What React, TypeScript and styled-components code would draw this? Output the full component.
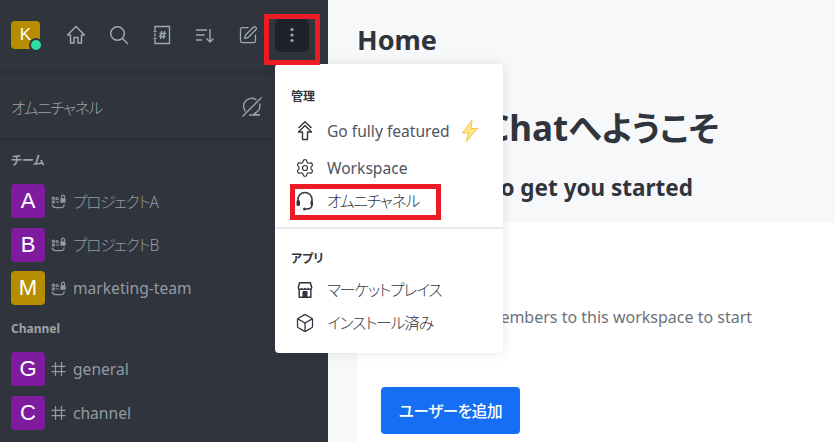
import React from "react";
import styled, { createGlobalStyle } from "styled-components";
import { Box, PenSquare, Settings } from "lucide-react";

const GlobalStyle = createGlobalStyle`
  html, body {
    margin: 0;
    height: 442px;
    overflow: hidden;
  }

  body {
    font-family: "Noto Sans", "Noto Sans CJK JP", sans-serif;
    font-feature-settings: "palt";
  }
`;

const Page = styled.div`
  position: relative;
  display: flex;
  width: 835px;
  height: 442px;
  overflow: hidden;
  background: #f7f8fa;
`;

const Sidebar = styled.aside`
  flex: 0 0 328px;
  background: #2f343d;
  color: #9ea2a8;
`;

const Toolbar = styled.div`
  display: flex;
  align-items: center;
  height: 73px;
  padding: 0 19px 2px 11px;
  box-sizing: border-box;
  border-bottom: 2px solid #2a2e36;
  color: #9ea9b5;
`;

const UserAvatar = styled.div`
  position: relative;
  display: flex;
  align-items: center;
  justify-content: center;
  width: 29px;
  height: 28px;
  margin-right: 10px;
  border-radius: 4px;
  background: #b68d00;
  color: #fff;
  font: 500 17px "Liberation Sans", sans-serif;
`;

const StatusDot = styled.span`
  position: absolute;
  right: -3px;
  bottom: -3px;
  width: 10px;
  height: 10px;
  border: 2px solid #2f343d;
  border-radius: 50%;
  background: #2de0a5;
`;

const ToolButton = styled.div<{ $active?: boolean }>`
  display: flex;
  align-items: center;
  justify-content: center;
  width: 34px;
  height: 34px;
  margin-left: ${(p) => (p.$active ? "10px" : "9px")};
  border-radius: 6px;
  background: ${(p) => (p.$active ? "#1f2329" : "transparent")};
`;

const OmniRow = styled.div`
  display: flex;
  align-items: center;
  justify-content: space-between;
  height: 67px;
  padding: 3px 65px 0 11px;
  box-sizing: border-box;
  border-bottom: 2px solid #2a2e36;
  font-size: 15.6px;
  color: #9ea2a8;
`;

const SectionLabel = styled.div<{ $top: number }>`
  margin: ${(p) => p.$top}px 0 15px 11px;
  font-size: 12px;
  font-weight: 700;
  line-height: 16px;
  color: #9ea2a8;
`;

const RoomRow = styled.div`
  display: flex;
  align-items: center;
  height: 34px;
  margin-bottom: 9.5px;
  padding-left: 11px;
  font-size: 15.6px;
  color: #959aa1;
`;

const RoomAvatar = styled.div<{ $color: string }>`
  display: flex;
  align-items: center;
  justify-content: center;
  flex: 0 0 34px;
  height: 34px;
  margin-right: 6px;
  border-radius: 4px;
  background: ${(p) => p.$color};
  color: #fff;
  font: 500 22px "Liberation Sans", sans-serif;
`;

const RoomIcon = styled.span`
  display: flex;
  width: 16px;
  margin-right: 6px;
`;

const Kana = styled.span`
  font-weight: 300;
  letter-spacing: -1.2px;
`;

const Main = styled.main`
  flex: 1;
  display: flex;
  flex-direction: column;
  min-width: 0;
`;

const PageTitle = styled.h1`
  margin: 0;
  padding: 21px 0 0 29px;
  height: 50px;
  font-size: 27px;
  font-weight: 700;
  line-height: 38px;
  color: #2f343d;
`;

const Hero = styled.section`
  height: 152px;
  color: #2f343d;
  box-sizing: border-box;
`;

const HeroTitle = styled.h2`
  margin: 0;
  padding: 32px 0 0 30px;
  font-size: 35px;
  font-weight: 700;
  line-height: 50px;
  white-space: nowrap;
`;

const HeroKana = styled.span`
  font-size: 34px;
`;

const HeroSub = styled.h3`
  margin: 0;
  padding: 20px 0 0 30px;
  font-size: 22.5px;
  font-weight: 700;
  line-height: 30px;
  white-space: nowrap;
`;

const Card = styled.section`
  flex: 1;
  margin-left: 29px;
  padding: 82px 0 0 24px;
  background: #fff;
`;

const CardText = styled.p`
  margin: 0 0 0 15px;
  width: 372px;
  font-size: 16px;
  line-height: 24px;
  color: #6c727a;
`;

const PrimaryButton = styled.button`
  display: block;
  width: 139px;
  height: 47px;
  margin-top: 34px;
  border: 0;
  border-radius: 4px;
  background: #156ff5;
  color: #fff;
  font: 500 15.6px "Noto Sans", "Noto Sans CJK JP", sans-serif;
  font-feature-settings: "palt";
  letter-spacing: -0.4px;
`;

const Menu = styled.div`
  position: absolute;
  left: 275px;
  top: 64px;
  width: 228px;
  height: 289px;
  border-radius: 4px;
  background: #fff;
  box-shadow: 0 0 12px rgba(47, 52, 61, 0.12);
  color: #2f343d;
`;

const MenuGroup = styled.div<{ $top: number }>`
  padding-top: ${(p) => p.$top}px;
`;

const MenuLabel = styled.div`
  margin-left: 16px;
  margin-bottom: 5px;
  font-size: 12px;
  font-weight: 700;
  line-height: 18px;
`;

const MenuItem = styled.div<{ $tall?: boolean }>`
  display: flex;
  align-items: center;
  height: ${(p) => (p.$tall ? "40px" : "33px")};
  padding-left: 20px;
  font-size: 15.6px;
  color: #4e5560;

  ${Kana} {
    color: #2f343d;
    letter-spacing: -1px;
  }
`;

const MenuIcon = styled.span`
  display: flex;
  justify-content: center;
  width: 20px;
  margin-right: 12px;
  color: #2f343d;
`;

const Divider = styled.div`
  height: 2px;
  margin-top: 10px;
  background: #eaeaef;
`;

const Bolt = styled.svg`
  margin-left: 11px;
`;

const Callout = styled.div<{ $x: number; $y: number; $w: number; $h: number }>`
  position: absolute;
  left: ${(p) => p.$x}px;
  top: ${(p) => p.$y}px;
  width: ${(p) => p.$w}px;
  height: ${(p) => p.$h}px;
  box-sizing: border-box;
  border: 5px solid #ed1c24;
`;

const HomeIcon = () => (
  <svg width="20" height="20" viewBox="0 0 20 20" fill="none" stroke="currentColor" strokeWidth="1.500" strokeLinejoin="round">
    <path d="M10 1.500L1.500 10h3v8h3.500v-5.500h4V18H15.500v-8h3z" />
  </svg>
);

const SearchIcon = () => (
  <svg width="20" height="20" viewBox="0 0 20 20" fill="none" stroke="currentColor" strokeWidth="1.500">
    <circle cx="8.500" cy="8.500" r="6.800" />
    <path d="M13.500 13.500L19 19" />
  </svg>
);

const DirectoryIcon = () => (
  <svg width="20" height="20" viewBox="0 0 20 20" fill="none" stroke="currentColor" strokeWidth="1.400">
    <path d="M3 5.500V1.500h14.500v17H3v-4" />
    <path d="M1.500 6.500h3M1.500 13.500h3M3 8.500v3" />
    <path d="M9.500 6l-1 8M12.500 6l-1 8M7.500 8.500h6.500M7 11.500h6.500" strokeWidth="1.300" />
  </svg>
);

const SortIcon = () => (
  <svg width="20" height="20" viewBox="0 0 20 20" fill="none" stroke="currentColor" strokeWidth="1.400">
    <path d="M1 5h11M1 10h8.500M1 15h6" />
    <path d="M15 4v13M11.500 13.500L15 17l3.500-3.500" />
  </svg>
);

const KebabIcon = () => (
  <svg width="20" height="20" viewBox="0 0 20 20" fill="#9ea9b5">
    <circle cx="10" cy="4.500" r="1.600" />
    <circle cx="10" cy="10" r="1.600" />
    <circle cx="10" cy="15.500" r="1.600" />
  </svg>
);

const MutedChatIcon = () => (
  <svg width="22" height="22" viewBox="0 0 22 22" fill="none" stroke="currentColor" strokeWidth="1.400">
    <path d="M4.500 15.500A8 8 0 0 1 15.500 4M18.500 7.500a8 8 0 0 1-5 10c1 1 3 1.500 5.500 1.500H8" />
    <path d="M1.500 20.500L20.500 1.500" />
  </svg>
);

const TeamIcon = () => (
  <svg width="17" height="17" viewBox="0 0 17 17" fill="none" stroke="currentColor" strokeWidth="1.200">
    <circle cx="2.500" cy="5" r="1.200" />
    <circle cx="2.500" cy="9" r="1.200" />
    <circle cx="6.500" cy="5.500" r="1.200" />
    <path d="M1 12c.5 1.500 2 3 4 3h6c1.500 0 3-1.200 3-3.500M5 9h3.500" />
    <rect x="10" y="5" width="5.500" height="4.800" rx="0.600" fill="currentColor" stroke="none" />
    <path d="M11.200 5V3.300a1.600 1.600 0 0 1 3.200 0V5" />
  </svg>
);

const HashIcon = () => (
  <svg width="16" height="16" viewBox="0 0 16 16" fill="none" stroke="currentColor" strokeWidth="1.200">
    <path d="M4.500 1v14M10.500 1v14M.5 5.300h14M.5 10.700h14" />
  </svg>
);

const UpgradeIcon = () => (
  <svg width="18" height="20" viewBox="0 0 18 20" fill="none" stroke="currentColor" strokeWidth="1.400" strokeLinejoin="round">
    <path d="M2.500 7L9 .8 15.500 7" />
    <path d="M9 4.500L2.500 11h4v7.500h5V11h4z" />
  </svg>
);

const HeadsetIcon = () => (
  <svg width="20" height="20" viewBox="0 0 20 20" fill="none" stroke="currentColor" strokeWidth="1.500">
    <path d="M3 10.500V8.500a7 7 0 0 1 14 0v2" />
    <rect x="1.500" y="9" width="3.500" height="6" rx="1.500" fill="currentColor" stroke="none" />
    <rect x="15.500" y="9.500" width="2.500" height="5" rx="1.200" fill="currentColor" stroke="none" />
    <path d="M17 14c0 3-2.500 4-6 4" />
    <circle cx="9.500" cy="18" r="1.500" fill="currentColor" stroke="none" />
  </svg>
);

const StoreIcon = () => (
  <svg width="18" height="18" viewBox="0 0 20 20" fill="none" stroke="currentColor" strokeWidth="1.600" strokeLinejoin="round">
    <path d="M4 2h12l1.500 5.500a2 2 0 0 1-3.700.8 2.300 2.300 0 0 1-3.800 0 2.300 2.300 0 0 1-3.800 0 2 2 0 0 1-3.700-.8z" />
    <path d="M3.500 9v9h13V9" />
    <path d="M8 18v-6h4v6" fill="currentColor" />
  </svg>
);

const rooms = [
  { letter: "A", color: "#7f1b9f", team: true, name: "プロジェクトA" },
  { letter: "B", color: "#7f1b9f", team: true, name: "プロジェクトB" },
  { letter: "M", color: "#b68d00", team: true, name: "marketing-team" },
];

const channels = [
  { letter: "G", color: "#7f1b9f", team: false, name: "general" },
  { letter: "C", color: "#7f1b9f", team: false, name: "channel" },
];

type Room = (typeof rooms)[number];

const RoomItem = ({ room }: { room: Room }) => (
  <RoomRow>
    <RoomAvatar $color={room.color}>{room.letter}</RoomAvatar>
    <RoomIcon>{room.team ? <TeamIcon /> : <HashIcon />}</RoomIcon>
    {room.name.startsWith("プ") ? <Kana>{room.name}</Kana> : room.name}
  </RoomRow>
);

export default function App() {
  return (
    <Page>
      <GlobalStyle />
      <Sidebar>
        <Toolbar>
          <UserAvatar>
            K
            <StatusDot />
          </UserAvatar>
          <ToolButton><HomeIcon /></ToolButton>
          <ToolButton><SearchIcon /></ToolButton>
          <ToolButton><DirectoryIcon /></ToolButton>
          <ToolButton><SortIcon /></ToolButton>
          <ToolButton><PenSquare size={20} strokeWidth={1.5} /></ToolButton>
          <ToolButton $active><KebabIcon /></ToolButton>
        </Toolbar>
        <OmniRow>
          <Kana>オムニチャネル</Kana>
          <MutedChatIcon />
        </OmniRow>
        <SectionLabel $top={13}>チーム</SectionLabel>
        {rooms.map((room) => (
          <RoomItem key={room.letter} room={room} />
        ))}
        <SectionLabel $top={16}>Channel</SectionLabel>
        {channels.map((room) => (
          <RoomItem key={room.letter} room={room} />
        ))}
      </Sidebar>

      <Main>
        <PageTitle>Home</PageTitle>
        <Hero>
          <HeroTitle>Rocket.Chat<HeroKana>へようこそ</HeroKana></HeroTitle>
          <HeroSub>Some ideas to get you started</HeroSub>
        </Hero>
        <Card>
          <CardText>Invite team members to this workspace to start chatting</CardText>
          <PrimaryButton>ユーザーを追加</PrimaryButton>
        </Card>
      </Main>

      <Menu>
        <MenuGroup $top={24}>
          <MenuLabel>管理</MenuLabel>
          <MenuItem $tall>
            <MenuIcon><UpgradeIcon /></MenuIcon>
            Go fully featured
            <Bolt width="18" height="24" viewBox="0 0 18 24">
              <path d="M11 1L1.500 14h6L5 23 16.500 9.500H10z" fill="#fde68a" stroke="#f5c451" strokeWidth="1" />
            </Bolt>
          </MenuItem>
          <MenuItem>
            <MenuIcon><Settings size={20} strokeWidth={1.4} /></MenuIcon>
            Workspace
          </MenuItem>
          <MenuItem>
            <MenuIcon><HeadsetIcon /></MenuIcon>
            <Kana>オムニチャネル</Kana>
          </MenuItem>
          <Divider />
        </MenuGroup>
        <MenuGroup $top={21}>
          <MenuLabel>アプリ</MenuLabel>
          <MenuItem>
            <MenuIcon><StoreIcon /></MenuIcon>
            <Kana>マーケットプレイス</Kana>
          </MenuItem>
          <MenuItem>
            <MenuIcon><Box size={20} strokeWidth={1.5} /></MenuIcon>
            <Kana>インストール済み</Kana>
          </MenuItem>
        </MenuGroup>
      </Menu>

      <Callout $x={264} $y={14} $w={56} $h={51} />
      <Callout $x={290} $y={184} $w={151} $h={36} />
    </Page>
  );
}
